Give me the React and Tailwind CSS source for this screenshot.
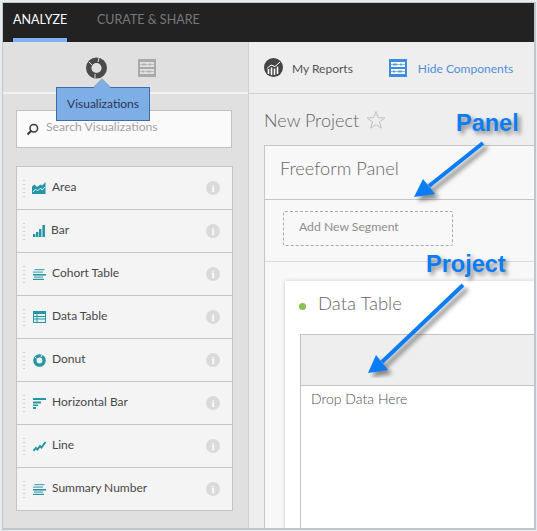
import React from 'react';

const ICON = '#2596a6';

const Area = () => (
  <svg width="14" height="12" viewBox="0 0 14 12">
    <path d="M0 4.5L2.5 2.5 5 5 8.5 2.5 10 3.5 13.5 0V12H0Z" fill={ICON} />
    <path d="M1 10L3.5 7 5.5 9 8.5 6 10 8 13 5" fill="none" stroke="#dff0f2" strokeWidth="1" />
  </svg>
);

const Bar = () => (
  <svg width="12" height="12" viewBox="0 0 12 12" fill={ICON}>
    <rect x="0" y="9" width="2.4" height="3" />
    <rect x="3" y="7" width="2.4" height="5" />
    <rect x="6" y="4" width="2.4" height="8" />
    <rect x="9.4" y="0" width="2.6" height="12" />
  </svg>
);

const Lines = () => (
  <svg width="13" height="11" viewBox="0 0 13 11" fill={ICON}>
    <rect x="1.5" y="0" width="10" height="1.2" opacity="0.8" />
    <rect x="0" y="2.5" width="10" height="1.2" opacity="0.8" />
    <rect x="0" y="5" width="13" height="1.6" />
    <rect x="1" y="7.5" width="9" height="1.2" opacity="0.8" />
    <rect x="0" y="9.8" width="11" height="1.2" />
  </svg>
);

const TableIcon = () => (
  <svg width="13" height="12" viewBox="0 0 13 12">
    <rect x="0.5" y="0.5" width="12" height="11" fill="#e4f2f4" stroke={ICON} />
    <rect x="0" y="0" width="13" height="3" fill={ICON} />
    <path d="M1 5.5H12M1 8H12M4 3V11" stroke={ICON} fill="none" />
  </svg>
);

const Donut = () => (
  <svg width="13" height="13" viewBox="0 0 13 13">
    <circle cx="6.5" cy="6.5" r="4.6" fill="none" stroke={ICON} strokeWidth="3.4" />
    <path d="M2 3L3.5 4.5M9 1L8 3" stroke="#f4f4f4" />
  </svg>
);

const HBar = () => (
  <svg width="13" height="11" viewBox="0 0 13 11" fill={ICON}>
    <rect x="0" y="0" width="13" height="2" />
    <rect x="0" y="3.5" width="8" height="2" />
    <rect x="0" y="6.5" width="5" height="1.5" />
    <rect x="0" y="9" width="3" height="2" />
  </svg>
);

const LineIcon = () => (
  <svg width="13" height="11" viewBox="0 0 13 11">
    <path d="M0.5 10L3 7 4.5 8.5 7 5 8.5 6.5 12.5 1" fill="none" stroke={ICON} strokeWidth="1.9" />
  </svg>
);

const rows = [
  { name: 'Area', icon: <Area />, nudge: 'ml-[6px]' },
  { name: 'Bar', icon: <Bar />, nudge: 'ml-[5px]' },
  { name: 'Cohort Table', icon: <Lines />, nudge: 'ml-[6px]' },
  { name: 'Data Table', icon: <TableIcon />, nudge: 'ml-[6px]' },
  { name: 'Donut', icon: <Donut />, nudge: 'ml-[6px]' },
  { name: 'Horizontal Bar', icon: <HBar />, nudge: 'ml-[6px]' },
  { name: 'Line', icon: <LineIcon />, nudge: 'ml-[6px]' },
  { name: 'Summary Number', icon: <Lines />, nudge: 'ml-[6px]' },
];

const Grip = () => (
  <div className="flex flex-col gap-[3px] w-[2px] mt-[1px]">
    {[0, 1, 2, 3, 4].map(i => (
      <span key={i} className="block w-[2px] h-[1px] bg-[#cfcfcf]" />
    ))}
  </div>
);

const Info = () => (
  <span className="flex items-center justify-center w-[14px] h-[14px] rounded-full bg-[#dadada] text-white text-[11px] font-bold leading-none font-['Liberation_Serif',serif]">
    i
  </span>
);

const Row = ({ row, last }) => (
  <div className={`flex items-center pl-[6px] pr-[12px] ${last ? 'h-[42px]' : 'h-[43px] border-b border-[#c6c6c6]'}`}>
    <Grip />
    <div className="ml-[7px] w-[14px] flex justify-center shrink-0">{row.icon}</div>
    <span className={`flex-1 text-[12px] text-[#484848] -mt-[2px] ${row.nudge}`}>{row.name}</span>
    <Info />
  </div>
);

// the same abacus glyph is used for the rail tab and for Hide Components
const Abacus = ({ color, bg }) => (
  <svg width="18" height="18" viewBox="0 0 18 18">
    <rect x="0" y="0" width="18" height="18" fill={color} />
    <rect x="2" y="3" width="14" height="5" fill={bg} />
    <rect x="2" y="10" width="14" height="5" fill={bg} />
    <path d="M2 5.5H16M2 12.5H16" stroke={color} strokeWidth="0.6" />
    <path d="M5 4.5V6.5M7 4.5V6.5M12 4.5V6.5M5 11.5V13.5M10 11.5V13.5M12 11.5V13.5" stroke={color} strokeWidth="1.4" />
  </svg>
);

const Arrow = ({ className, x1, y1, x2, y2, head }) => (
  <svg className={className} width="130" height="115" viewBox="0 0 130 115">
    <defs>
      <filter id="arrowBlur" x="-30%" y="-30%" width="160%" height="160%">
        <feGaussianBlur stdDeviation="2" />
      </filter>
    </defs>
    <g transform="translate(4 4)" opacity="0.55" filter="url(#arrowBlur)">
      <line x1={x1} y1={y1} x2={x2} y2={y2} stroke="#333" strokeWidth="4" />
      <polygon points={head} fill="#333" />
    </g>
    <line x1={x1} y1={y1} x2={x2} y2={y2} stroke="#0a7df5" strokeWidth="4" />
    <polygon points={head} fill="#0a7df5" />
  </svg>
);

export default function App() {
  return (
    <div className="w-[537px] h-[531px] bg-[#e6ebf0] pt-[2px] pl-[2px] pr-[1px] pb-[1px] overflow-hidden font-['Lato','Open_Sans',sans-serif]">
      <div className="relative h-[528px] border-t border-l border-r-2 border-b-2 border-[#c2c6ca] flex flex-col overflow-hidden">
        {/* Top tabs */}
        <div className="h-[39px] shrink-0 bg-[#222222] flex text-[12.5px]">
          <div className="ml-[10px] w-[54px] h-[39px] border-b-[4px] border-[#7eb2f0] text-white pt-[9px] leading-[16px] whitespace-nowrap">
            ANALYZE
          </div>
          <div className="ml-[30px] pt-[9px] leading-[16px] text-[#74797d] whitespace-nowrap">CURATE &amp; SHARE</div>
        </div>

        <div className="flex flex-1 min-h-0">
          {/* Left rail */}
          <div className="relative w-[246px] shrink-0 bg-[#e0e0e0] border-r border-[#d2d2d2]">
            <div className="h-[52px] border-b-2 border-b-[#f2f2f2] flex items-start pl-[83px] pt-[15px] gap-[30px]">
              <svg width="22" height="22" viewBox="0 0 22 22">
                <circle cx="10.5" cy="11" r="7.8" fill="none" stroke="#4a4a4a" strokeWidth="5.4" />
                <path d="M3 5L6 8M13 1L12 5M9 17L9 21" stroke="#e0e0e0" strokeWidth="1" />
              </svg>
              <div className="mt-[2px]">
                <Abacus color="#a9a9a9" bg="#e0e0e0" />
              </div>
            </div>

            {/* Tooltip */}
            <div className="absolute left-[53px] top-[45px] z-10 w-[94px] h-[34px] bg-[#7eaee6] border border-[#3f6ba8] text-[12px] text-[#2b3550] flex items-center justify-center">
              <span className="absolute left-[39px] -top-[7px] w-[12px] h-[12px] bg-[#7eaee6] rotate-45 border-t border-l border-[#8fa6c4]" />
              <span className="relative">Visualizations</span>
            </div>

            <div className="px-[13px] pt-[16px]">
              <div className="h-[38px] w-[216px] bg-[#fafafa] border border-[#bfbfbf] flex items-start pl-[9px] pt-[9px] gap-[7px]">
                <svg className="mt-[3px]" width="13" height="13" viewBox="0 0 13 13">
                  <circle cx="7.8" cy="5.2" r="3.8" fill="none" stroke="#3a3a3a" strokeWidth="1.5" />
                  <path d="M5 8L1.5 11.5" stroke="#3a3a3a" strokeWidth="2.2" />
                </svg>
                <span className="text-[12.2px] text-[#a3a3a3] leading-[16px] -mt-[1px]">Search Visualizations</span>
              </div>

              <div className="mt-[18px] w-[217px] bg-[#f4f4f4] border border-[#c4c4c4]">
                {rows.map((row, i) => (
                  <Row key={row.name} row={row} last={i === rows.length - 1} />
                ))}
              </div>
            </div>
          </div>

          {/* Main */}
          <div className="relative flex-1 min-w-0 bg-[#eeeeee] overflow-hidden">
            <div className="h-[52px] border-b border-[#d2d2d2] flex items-center pl-[15px] text-[12px]">
              <svg width="19" height="19" viewBox="0 0 19 19">
                <circle cx="9.5" cy="9.5" r="9.5" fill="#444444" />
                <path d="M3 10.5L7 7 11 8.5 16 4" fill="none" stroke="#fff" strokeWidth="1" />
                <path d="M4.5 11V16M7.5 9.5V17M10.5 10.5V17M13.5 8.5V16" stroke="#fff" strokeWidth="1.6" />
              </svg>
              <span className="ml-[9px] mt-[2px] text-[#555555]">My Reports</span>
              <div className="ml-[36px]">
                <Abacus color="#3e8ddd" bg="#f2f7fc" />
              </div>
              <span className="ml-[11px] mt-[2px] text-[#4f8edb]">Hide Components</span>
            </div>

            <div className="flex items-center h-[51px] pl-[15px] pt-[1px]">
              <span className="text-[18px] font-light text-[#666666]">New Project</span>
              <svg className="ml-[7px]" width="20" height="20" viewBox="0 0 20 20">
                <polygon
                  points="10,1.5 12.2,7.6 18.8,8 13.5,11.8 15.3,18.2 10,14.6 4.7,18.2 6.5,11.8 1.2,8 7.8,7.6"
                  fill="none"
                  stroke="#c0c0c0"
                />
              </svg>
            </div>

            {/* Panel */}
            <div className="ml-[15px] w-[400px] h-[400px] bg-[#f8f8f8] border-l border-t border-[#c6c6c6]">
              <div className="h-[54px] border-b border-[#c6c6c6] pl-[15px] pt-[10px] text-[18.2px] leading-[24px] font-light text-[#666666]">
                Freeform Panel
              </div>
              <div className="h-[62px] border-b border-[#dcdcdc] pl-[18px] pt-[11px]">
                <div className="w-[170px] h-[35px] rounded-[2px] border border-dashed border-[#aaaaaa] pl-[15px] pb-[3px] flex items-center text-[12.2px] text-[#8e8e8e]">
                  Add New Segment
                </div>
              </div>
              {/* Data table card */}
              <div className="ml-[20px] mt-[19px] h-[300px] bg-white shadow-[0_0_4px_rgba(0,0,0,0.18)] pl-[15px]">
                <div className="h-[53px] flex items-center -ml-[1px]">
                  <span className="w-[7px] h-[7px] rounded-full bg-[#8cc152] -mt-[2px]" />
                  <span className="ml-[12px] text-[18.5px] font-light text-[#666666] -mt-[8px]">Data Table</span>
                </div>
                <div className="h-[300px] border-l border-t border-[#c4c4c4]">
                  <div className="h-[51px] bg-[#eeeeee] border-b border-[#c4c4c4]" />
                  <div className="pl-[10px] pt-[2px] text-[14px] font-light text-[#4f4f4f]">Drop Data Here</div>
                </div>
              </div>
            </div>
          </div>

          {/* Annotations over the screenshot */}
          <div className="absolute left-[453px] top-[107px] text-[23.5px] leading-[26px] font-bold font-['Liberation_Sans',sans-serif] text-[#0a7df5] [text-shadow:3px_3px_4px_rgba(0,0,0,0.45)]">
            Panel
          </div>
          <div className="absolute left-[423px] top-[248px] text-[23.5px] leading-[26px] font-bold font-['Liberation_Sans',sans-serif] text-[#0a7df5] [text-shadow:3px_3px_4px_rgba(0,0,0,0.45)]">
            Project
          </div>
          <Arrow
            className="absolute left-[380px] top-[115px] pointer-events-none"
            x1={100}
            y1={25}
            x2={46}
            y2={68}
            head="31,79 52,76 40,61"
          />
          <Arrow
            className="absolute left-[340px] top-[260px] pointer-events-none"
            x1={120}
            y1={22}
            x2={39}
            y2={99}
            head="25,110 45,107 33,92"
          />
        </div>
      </div>
    </div>
  );
}
